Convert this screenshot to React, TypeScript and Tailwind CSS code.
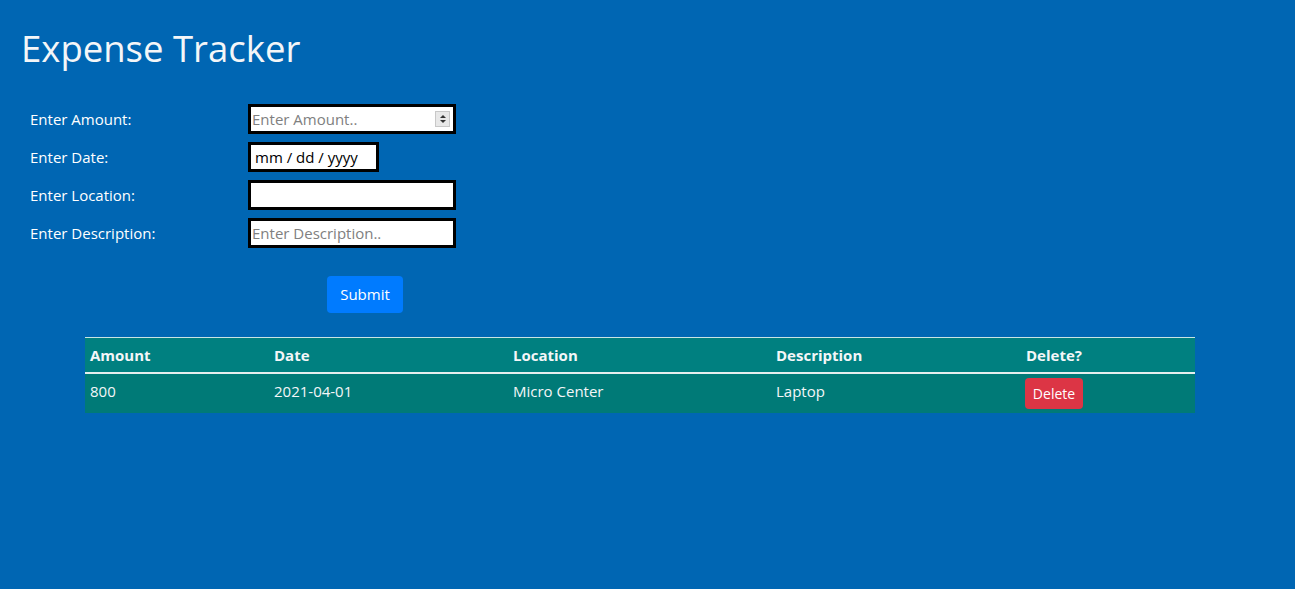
import React from "react";

const font = { fontFamily: '"Open Sans", "Noto Sans", sans-serif' };

const rows = [
  { amount: "800", date: "2021-04-01", location: "Micro Center", description: "Laptop" },
];

const Field = ({ label, children }: { label: string; children: React.ReactNode }) => (
  <div className="flex items-center h-[38px]">
    <label className="w-[218px] text-[15px] text-white">{label}</label>
    {children}
  </div>
);

const App = () => {
  return (
    <div className="min-h-[589px] bg-[#0066b3] text-white" style={font}>
      <h1 className="pl-[21px] pt-[22px] text-[36.5px] leading-[52px] font-normal text-[#f4f6f8]">
        Expense Tracker
      </h1>

      <form className="mt-[26px] pl-[30px]" onSubmit={(e) => e.preventDefault()}>
        <Field label="Enter Amount:">
          <div className="relative w-[208px] h-[30px] border-[3px] border-black bg-white flex items-center">
            <input
              placeholder="Enter Amount.."
              className="w-full h-full px-[1px] text-[15px] text-black placeholder:text-[#808080] outline-none bg-transparent"
            />
            <div className="absolute right-[3px] top-[4px] w-[15px] h-[16px] bg-[#e8e8e8] border border-[#c8c8c8] flex flex-col items-center justify-center gap-[2px]">
              <div className="w-0 h-0 border-l-[3px] border-r-[3px] border-b-[3px] border-l-transparent border-r-transparent border-b-[#333]" />
              <div className="w-0 h-0 border-l-[3px] border-r-[3px] border-t-[3px] border-l-transparent border-r-transparent border-t-[#333]" />
            </div>
          </div>
        </Field>
        <Field label="Enter Date:">
          <div className="w-[131px] h-[30px] border-[3px] border-black bg-white flex items-center pl-[4px] text-[15px] text-black">
            mm / dd / yyyy
          </div>
        </Field>
        <Field label="Enter Location:">
          <input className="w-[208px] h-[30px] border-[3px] border-black bg-white text-[15px] text-black outline-none" />
        </Field>
        <Field label="Enter Description:">
          <input
            placeholder="Enter Description.."
            className="w-[208px] h-[30px] border-[3px] border-black bg-white px-[1px] text-[15px] text-black placeholder:text-[#808080] outline-none"
          />
        </Field>

        <div className="pl-[297px] mt-[24px]">
          <button
            type="submit"
            className="w-[76px] h-[37px] rounded-[4px] bg-[#007bff] text-[15px] text-white"
          >
            Submit
          </button>
        </div>
      </form>

      <div className="ml-[85px] mt-[24px] w-[1110px]">
        <table className="w-full border-collapse text-[15px] text-[#f4f6f8]">
          <thead>
            <tr className="bg-[#008080] border-t border-[#c9e4e4] border-b-2 border-b-[#e6eeee]">
              <th className="h-[35px] pl-[5px] w-[184px] text-left font-bold">Amount</th>
              <th className="pl-[5px] w-[239px] text-left font-bold">Date</th>
              <th className="pl-[5px] w-[263px] text-left font-bold">Location</th>
              <th className="pl-[5px] w-[250px] text-left font-bold">Description</th>
              <th className="pl-[5px] text-left font-bold">Delete?</th>
            </tr>
          </thead>
          <tbody>
            {rows.map((r) => (
              <tr key={r.amount} className="bg-[#007a77] align-top">
                <td className="h-[40px] pl-[5px] pt-[6px]">{r.amount}</td>
                <td className="pl-[5px] pt-[6px]">{r.date}</td>
                <td className="pl-[5px] pt-[6px]">{r.location}</td>
                <td className="pl-[5px] pt-[6px]">{r.description}</td>
                <td className="pl-[4px] pt-[4px]">
                  <button className="w-[58px] h-[31px] rounded-[4px] bg-[#dc3545] text-[14px] text-white">
                    Delete
                  </button>
                </td>
              </tr>
            ))}
          </tbody>
        </table>
      </div>
    </div>
  );
};

export default App;
